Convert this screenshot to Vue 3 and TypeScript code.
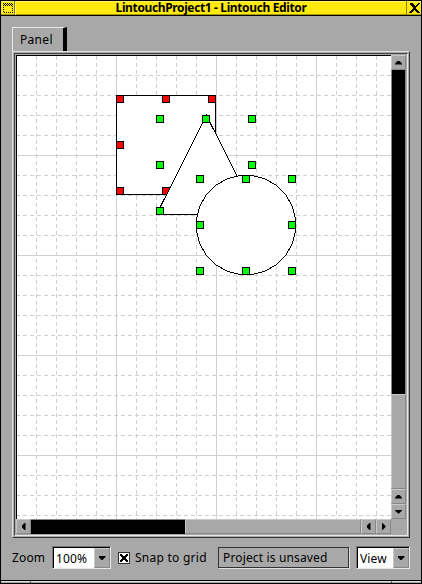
<script setup lang="ts">
const minor = (to: number): number[] => {
  const out: number[] = []
  for (let v = 20; v < to; v += 20) if (v % 100 !== 0) out.push(v)
  return out
}
const vMinor = minor(375)
const hMinor = minor(464)
const vMajor = [100, 200, 300]
const hMajor = [100, 200, 300, 400]
const redHandles = [[100, 40], [146, 40], [192, 40], [100, 86], [100, 132], [146, 132]]
const greenHandles = [
  [140, 60], [186, 60], [232, 60], [140, 106], [232, 106], [140, 152],
  [180, 120], [226, 120], [272, 120], [180, 166], [272, 166], [180, 212], [226, 212], [272, 212],
]
const ring = Array.from({ length: 24 }, (_, i) => {
  const a = ((i + 0.5) / 24) * Math.PI * 2
  return `${(230 + 49.9 * Math.cos(a)).toFixed(1)},${(170 + 49.9 * Math.sin(a)).toFixed(1)}`
}).join(' ')
</script>

<template>
  <div class="window">
    <header class="title">
      <span class="sys"><svg width="12" height="12" shape-rendering="crispEdges"><path d="M1 1.500H11M2 2.500H11M1 3.500H11M1.500 5V11M10.500 4V11M2 10.500H11" fill="none" stroke="#000" stroke-dasharray="1 1" /></svg></span>
      <span class="caption">LintouchProject1 - Lintouch Editor</span>
      <span class="close"><svg width="13" height="13" shape-rendering="crispEdges"><path d="M1 1h3v1h1v1h1v1h1v-1h1v-1h1v-1h2v1h-1v1h-1v1h-1v1h-1v2h1v1h1v1h1v1h1v1h-3v-1h-1v-1h-1v-1h-1v1h-1v1h-1v1h-3v-1h1v-1h1v-1h1v-1h1v-2h-1v-1h-1v-1h-1v-1h-1z" /></svg></span>
    </header>
    <main class="body">
      <div class="tab"><span class="label">Panel</span></div>
      <section class="panel">
        <div class="view">
          <svg class="canvas" width="375" height="464" shape-rendering="crispEdges">
            <rect width="375" height="464" fill="#fff" />
            <g stroke="#d0d0d0" stroke-dasharray="4 3">
              <path v-for="x in vMinor" :key="'v' + x" :d="`M${x + 0.5} 1V464`" />
              <path v-for="y in hMinor" :key="'h' + y" :d="`M0 ${y + 0.5}H375`" />
            </g>
            <g stroke="#d0d0d0">
              <path v-for="x in vMajor" :key="'V' + x" :d="`M${x + 0.5} 0V464`" />
              <path v-for="y in hMajor" :key="'H' + y" :d="`M0 ${y + 0.5}H375`" />
            </g>
            <path d="M.5 464V.5H375" fill="none" stroke="#000" />
            <rect x="100.500" y="40.500" width="99" height="99" fill="#fff" stroke="#000" />
            <g fill="#f00" stroke="#000">
              <rect v-for="(p, i) in redHandles" :key="i" :x="p[0] + 0.5" :y="p[1] + 0.5" width="7" height="7" />
            </g>
            <path d="M190.500 60.500L240.500 159.500H140.500Z" fill="#fff" stroke="#000" />
            <polygon :points="ring" fill="#fff" stroke="#000" />
            <g fill="#0f0" stroke="#000">
              <rect v-for="(p, i) in greenHandles" :key="i" :x="p[0] + 0.5" :y="p[1] + 0.5" width="7" height="7" />
            </g>
          </svg>
          <div class="vbar">
            <span class="btn"><i class="up"></i></span>
            <span class="vthumb"></span>
            <span class="track"></span>
            <span class="btn"><i class="up"></i></span>
            <span class="btn"><i class="down"></i></span>
          </div>
          <div class="hbar">
            <span class="btn"><i class="left"></i></span>
            <span class="hthumb"></span>
            <span class="track"></span>
            <span class="btn"><i class="left"></i></span>
            <span class="btn"><i class="right"></i></span>
          </div>
        </div>
      </section>
      <footer class="tools">
        <span class="label zoom">Zoom</span>
        <div class="combo combo-zoom"><span class="label value">100%</span><span class="drop"><i class="down"></i></span></div>
        <span class="check"><svg width="8" height="8" shape-rendering="crispEdges"><path d="M0 0h2v1h1v1h2v-1h1v-1h2v2h-1v1h-1v2h1v1h1v2h-2v-1h-1v-1h-2v1h-1v1h-2v-2h1v-1h1v-2h-1v-1h-1z" /></svg></span>
        <span class="label snap">Snap to grid</span>
        <div class="status"><span class="label">Project is unsaved</span></div>
        <div class="combo combo-view"><span class="label value">View</span><span class="drop"><i class="down"></i></span></div>
      </footer>
    </main>
    <div class="grip"><span></span><span></span><span></span></div>
  </div>
</template>

<style>
body { margin: 0; overflow: hidden; }
</style>
<style scoped>
* { box-sizing: border-box; }
svg { display: block; }
.window { width: 422px; height: 584px; background: #a8a8a8; border: 1px solid #000; font: 12px/16px "Noto Sans", sans-serif; display: flex; flex-direction: column; color: #000; }
.title { height: 15px; flex: none; display: flex; background: #ffe90f; border-bottom: 1px solid #000; box-shadow: inset 0 -1px #a89800, inset 0 1px #fff36a; }
.sys { width: 14px; padding: 1px 0 0 1px; border-right: 1px solid #8c7e00; }
.caption { flex: 1; text-align: center; font: bold 12px/14px "Noto Sans", sans-serif; letter-spacing: -0.37px; white-space: nowrap; border-left: 1px solid #fff799; }
.close { width: 15px; padding: 1px 0 0 2px; border-left: 1px solid #8c7e00; }
.body { flex: 1; padding: 11px 10px 0 11px; min-height: 0; }
.label { white-space: nowrap; letter-spacing: 0.15px; }
.tab { width: 55px; height: 24px; border: 1px solid #e8e8e8; border-width: 1px 0 0 1px; border-right: 4px solid #000; padding: 4px 0 0 7px; }
.tab .label { letter-spacing: 0.3px; }
.panel { width: 398px; height: 487px; border: 1px solid #e0e0e0; border-right-color: #333; border-bottom-color: #333; padding: 1px; }
.view { width: 394px; height: 483px; border: 1px solid #444; border-right-color: #e8e8e8; border-bottom-color: #e8e8e8; padding: 1px; display: grid; grid-template-columns: 375px 15px; grid-template-rows: 464px 15px; }
.vbar { display: flex; flex-direction: column; }
.hbar { display: flex; }
.btn, .track, .drop { border: 1px solid #c8c8c8; border-right-color: #888; border-bottom-color: #888; }
.btn { width: 15px; height: 15px; flex: none; display: flex; align-items: center; justify-content: center; }
.track { flex: 1; }
.vthumb { height: 324px; background: #000; border: 1px solid #888; border-width: 0 1px 0 1px; }
.hthumb { width: 154px; background: #000; border-top: 1px solid #888; }
i { display: block; background: #000; }
.up { width: 7px; height: 4px; clip-path: polygon(3px 0, 4px 0, 7px 3px, 7px 4px, 0 4px, 0 3px); }
.down { width: 7px; height: 4px; clip-path: polygon(0 0, 7px 0, 7px 1px, 4px 4px, 3px 4px, 0 1px); }
.left { width: 4px; height: 7px; clip-path: polygon(4px 0, 4px 7px, 3px 7px, 0 4px, 0 3px, 3px 0); }
.right { width: 4px; height: 7px; clip-path: polygon(0 0, 1px 0, 4px 3px, 4px 4px, 1px 7px, 0 7px); }
.tools { height: 23px; margin-top: 8px; display: flex; align-items: center; }
.tools > * { flex: none; }
.zoom { width: 40px; }
.combo { height: 23px; background: #fff; border: 1px solid #777; border-right-color: #e8e8e8; border-bottom-color: #e8e8e8; box-shadow: inset 1px 1px #000; display: flex; padding: 1px 0 0 1px; }
.combo-zoom { width: 59px; }
.value { flex: 1; padding: 3px 0 0 2px; }
.drop { width: 16px; background: #a8a8a8; display: flex; align-items: center; justify-content: center; }
.check { margin-left: 7px; width: 12px; height: 12px; padding: 1px; background: #fff; border: 1px solid #333; }
.snap { margin-left: 5px; width: 83px; letter-spacing: 0.25px; }
.status { width: 131px; height: 21px; border: 1px solid #333; box-shadow: 1px 1px #e0e0e0; padding: 2px 4px; }
.combo-view { margin-left: 7px; width: 54px; }
.grip { height: 3px; border-top: 1px solid #000; display: flex; background: #a8a8a8; }
.grip span { flex: 1; border-top: 1px solid #e0e0e0; }
.grip span:first-child { flex: 0 0 30px; border-right: 1px solid #333; }
.grip span:last-child { flex: 0 0 30px; border-left: 1px solid #333; }
</style>
